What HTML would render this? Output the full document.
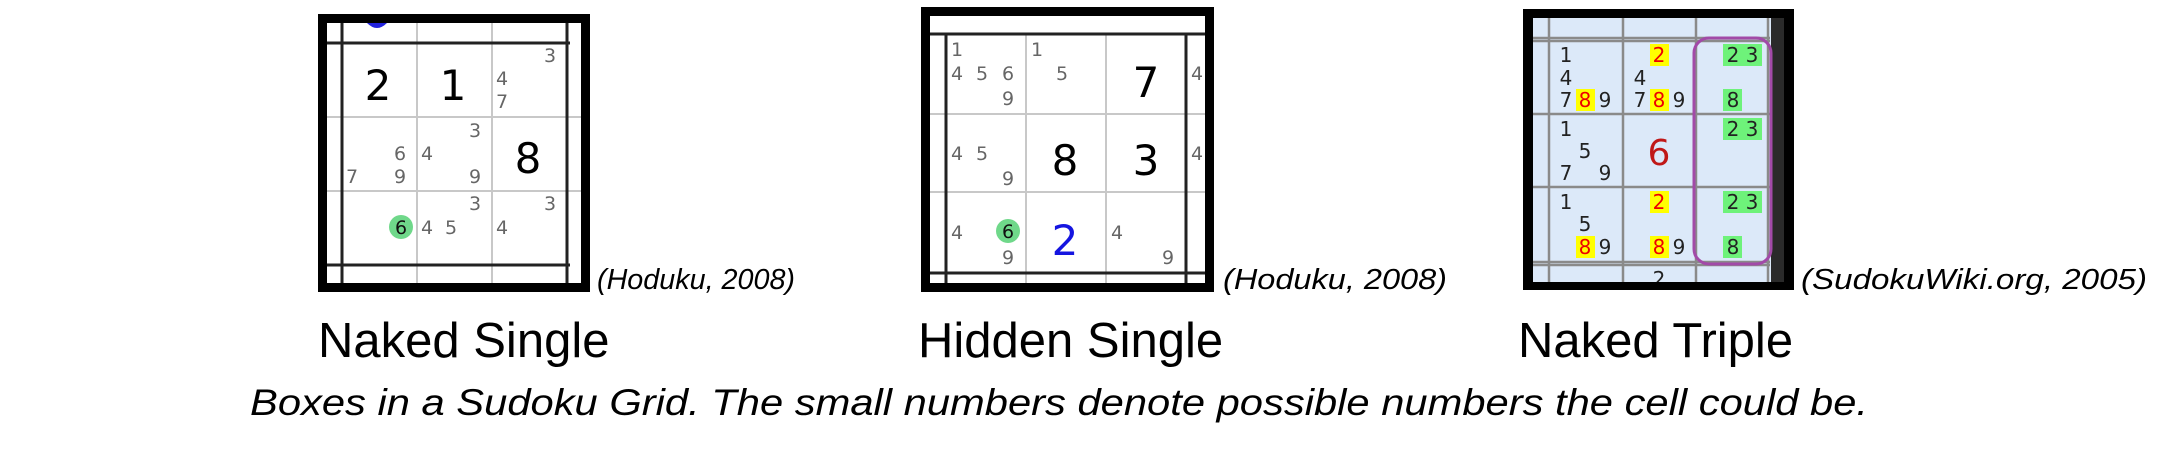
<!DOCTYPE html>
<html><head><meta charset="utf-8"><style>
html,body{margin:0;padding:0;background:#fff;}
svg{display:block}
.s{font-family:"DejaVu Sans","Liberation Sans",sans-serif;font-size:19px;fill:#666;text-anchor:middle}
.b{font-family:"DejaVu Sans","Liberation Sans",sans-serif;font-size:42px;fill:#000;text-anchor:middle}
.t{font-family:"DejaVu Sans","Liberation Sans",sans-serif;font-size:20px;fill:#222;text-anchor:middle}
.r{fill:#e00}
.cap{font-family:"Liberation Sans",sans-serif;font-style:italic;font-size:29px;fill:#000}
.ti{font-family:"Liberation Sans",sans-serif;font-size:49px;fill:#000}
</style></head><body>
<svg width="2170" height="468" viewBox="0 0 2170 468" xmlns="http://www.w3.org/2000/svg">
<!-- Box 1 -->
<rect x="318" y="14" width="272" height="278" fill="#000"/>
<rect x="327" y="23" width="254" height="260" fill="#fff"/>
<path d="M367 23 Q377 33 387 23 Z" fill="#22d"/>
<g stroke="#c8c8c8" stroke-width="2">
<line x1="417" y1="23" x2="417" y2="283"/><line x1="492" y1="23" x2="492" y2="283"/>
<line x1="327" y1="117" x2="581" y2="117"/><line x1="327" y1="191" x2="581" y2="191"/>
</g>
<g stroke="#222" stroke-width="3">
<line x1="342" y1="23" x2="342" y2="283"/><line x1="567" y1="23" x2="567" y2="283"/>
<line x1="327" y1="43" x2="570" y2="43"/><line x1="327" y1="265" x2="570" y2="265"/>
</g>
<text class="b" x="378" y="100">2</text><text class="b" x="453" y="100">1</text>
<text class="s" x="550" y="62">3</text><text class="s" x="502" y="85">4</text><text class="s" x="502" y="108">7</text>
<text class="s" x="400" y="160">6</text><text class="s" x="352" y="183">7</text><text class="s" x="400" y="183">9</text>
<text class="s" x="475" y="137">3</text><text class="s" x="427" y="160">4</text><text class="s" x="475" y="183">9</text>
<text class="b" x="528" y="173">8</text>
<circle cx="401" cy="227" r="12" fill="#6fd88a"/><text class="s" x="401" y="234" style="fill:#111">6</text>
<text class="s" x="475" y="210">3</text><text class="s" x="427" y="234">4</text><text class="s" x="451" y="234">5</text>
<text class="s" x="550" y="210">3</text><text class="s" x="502" y="234">4</text>
<text class="cap" x="597" y="289" textLength="198" lengthAdjust="spacingAndGlyphs">(Hoduku, 2008)</text>

<!-- Box 2 -->
<rect x="921" y="7" width="293" height="285" fill="#000"/>
<rect x="930" y="16" width="275" height="267" fill="#fff"/>
<g stroke="#c8c8c8" stroke-width="2">
<line x1="1026" y1="34" x2="1026" y2="283"/><line x1="1106" y1="34" x2="1106" y2="283"/>
<line x1="930" y1="114" x2="1205" y2="114"/><line x1="930" y1="192" x2="1205" y2="192"/>
</g>
<g stroke="#222" stroke-width="3">
<line x1="946" y1="34" x2="946" y2="283"/><line x1="1186" y1="34" x2="1186" y2="283"/>
<line x1="930" y1="34" x2="1205" y2="34"/><line x1="930" y1="273" x2="1205" y2="273"/>
</g>
<text class="s" x="957" y="56">1</text><text class="s" x="957" y="80">4</text><text class="s" x="982" y="80">5</text><text class="s" x="1008" y="80">6</text><text class="s" x="1008" y="105">9</text>
<text class="s" x="1037" y="56">1</text><text class="s" x="1062" y="80">5</text>
<text class="b" x="1146" y="97">7</text><text class="s" x="1197" y="80">4</text>
<text class="s" x="957" y="160">4</text><text class="s" x="982" y="160">5</text><text class="s" x="1008" y="185">9</text>
<text class="b" x="1065" y="175">8</text><text class="b" x="1146" y="175">3</text><text class="s" x="1197" y="160">4</text>
<text class="s" x="957" y="239">4</text>
<circle cx="1008" cy="231" r="12" fill="#6fd88a"/><text class="s" x="1008" y="238" style="fill:#111">6</text>
<text class="s" x="1008" y="264">9</text>
<text class="b" x="1065" y="255" style="fill:#1515e0">2</text>
<text class="s" x="1117" y="239">4</text><text class="s" x="1168" y="264">9</text>
<text class="cap" x="1223" y="289" textLength="224" lengthAdjust="spacingAndGlyphs">(Hoduku, 2008)</text>

<!-- Box 3 -->
<rect x="1523" y="9" width="271" height="281" fill="#000"/>
<rect x="1533" y="18" width="251" height="264" fill="#dce9f9"/>
<rect x="1771" y="18" width="13" height="264" fill="#2a2a2a"/>
<g stroke="#8a8a8a" stroke-width="2.5">
<line x1="1549" y1="18" x2="1549" y2="282"/><line x1="1623" y1="18" x2="1623" y2="282"/>
<line x1="1696" y1="18" x2="1696" y2="282"/><line x1="1768" y1="18" x2="1768" y2="282"/>
<line x1="1533" y1="38" x2="1770" y2="38"/><line x1="1533" y1="41" x2="1770" y2="41"/>
<line x1="1533" y1="114" x2="1770" y2="114"/><line x1="1533" y1="187" x2="1770" y2="187"/>
<line x1="1533" y1="262" x2="1770" y2="262"/><line x1="1533" y1="265" x2="1770" y2="265"/>
</g>
<g fill="#ffff00">
<rect x="1576" y="89" width="19" height="22"/><rect x="1650" y="44" width="19" height="22"/><rect x="1650" y="89" width="19" height="22"/>
<rect x="1576" y="236" width="19" height="22"/><rect x="1650" y="191" width="19" height="22"/><rect x="1650" y="236" width="19" height="22"/>
</g>
<g fill="#6ef27a">
<rect x="1723" y="44" width="39" height="22"/><rect x="1723" y="89" width="19" height="22"/>
<rect x="1723" y="118" width="39" height="22"/>
<rect x="1723" y="191" width="39" height="22"/><rect x="1723" y="236" width="19" height="22"/>
</g>
<text class="t" x="1566" y="62">1</text><text class="t" x="1566" y="85">4</text><text class="t" x="1566" y="107">7</text><text class="t r" x="1585" y="107">8</text><text class="t" x="1605" y="107">9</text>
<text class="t r" x="1659" y="62">2</text><text class="t" x="1640" y="85">4</text><text class="t" x="1640" y="107">7</text><text class="t r" x="1659" y="107">8</text><text class="t" x="1679" y="107">9</text>
<text class="t" x="1733" y="62">2</text><text class="t" x="1752" y="62">3</text><text class="t" x="1733" y="107">8</text>
<text class="t" x="1566" y="136">1</text><text class="t" x="1585" y="158">5</text><text class="t" x="1566" y="180">7</text><text class="t" x="1605" y="180">9</text>
<text class="b" x="1659" y="165" style="fill:#c01818;font-size:36px">6</text>
<text class="t" x="1733" y="136">2</text><text class="t" x="1752" y="136">3</text>
<text class="t" x="1566" y="209">1</text><text class="t" x="1585" y="231">5</text><text class="t r" x="1585" y="254">8</text><text class="t" x="1605" y="254">9</text>
<text class="t r" x="1659" y="209">2</text><text class="t r" x="1659" y="254">8</text><text class="t" x="1679" y="254">9</text>
<text class="t" x="1733" y="209">2</text><text class="t" x="1752" y="209">3</text><text class="t" x="1733" y="254">8</text>
<text class="t" x="1659" y="286">2</text>
<rect x="1523" y="282" width="271" height="8" fill="#000"/>
<rect x="1694" y="38" width="77" height="226" rx="15" fill="none" stroke="#a24aa8" stroke-width="3"/>
<text class="cap" x="1801" y="289" textLength="346" lengthAdjust="spacingAndGlyphs">(SudokuWiki.org, 2005)</text>

<!-- Titles -->
<text class="ti" x="318" y="357">Naked Single</text>
<text class="ti" x="918" y="357">Hidden Single</text>
<text class="ti" x="1518" y="357">Naked Triple</text>
<text class="cap" x="250" y="415" style="font-size:37px" textLength="1618" lengthAdjust="spacingAndGlyphs">Boxes in a Sudoku Grid. The small numbers denote possible numbers the cell could be.</text>
</svg>
</body></html>
